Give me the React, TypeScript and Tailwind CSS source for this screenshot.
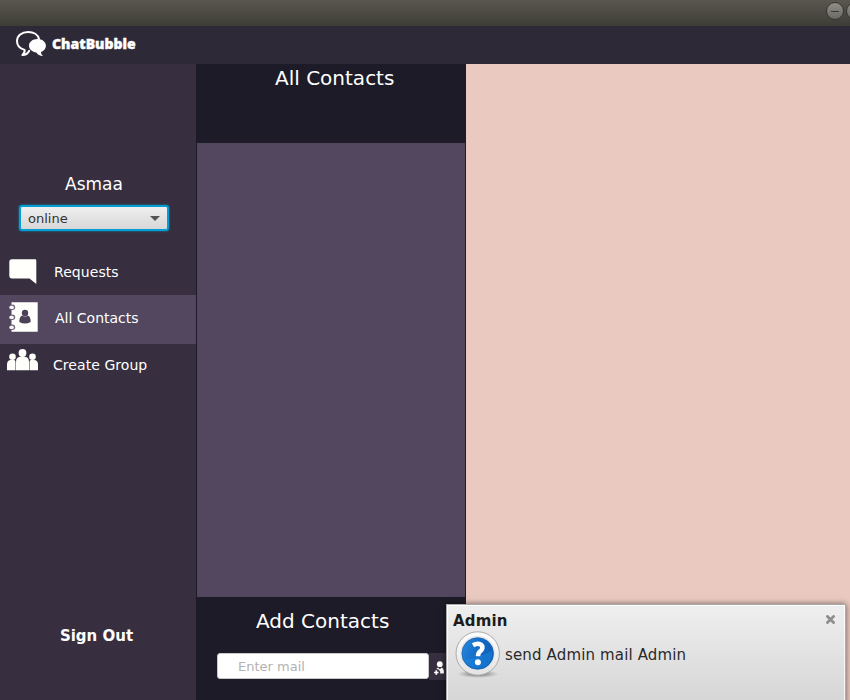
import React from "react";

function LogoIcon() {
  return (
    <svg width="32" height="28" viewBox="0 0 32 28" className="shrink-0">
      <path
        d="M24 9C23 4.400 18.500 1.900 13.200 1.900C6.700 1.900 2 5.900 2 11C2 15.400 5 18.700 9.600 19.900C9.900 21.800 9.200 23.600 7.400 25.100C10.700 25.100 12.900 23.500 14.200 20.800"
        fill="none"
        stroke="#fff"
        strokeWidth="2"
        strokeLinecap="round"
        strokeLinejoin="round"
      />
      <path
        d="M22.500 9C27.300 9 30.900 11.900 30.900 15.700C30.900 18.500 29 20.900 26 21.900C25.900 23.400 26.700 24.700 28.200 26.100C24.700 25.900 22.600 24.500 21.400 22.400C17.200 22 14 19.300 14 15.700C14 11.900 17.700 9 22.500 9Z"
        fill="#fff"
      />
    </svg>
  );
}

function RequestIcon() {
  return (
    <svg width="28" height="26" viewBox="0 0 28 26">
      <path d="M3 .3H26Q27.300 .3 27.300 1.500V25L20.500 19.500H3Q.3 19.500 .3 16.500V3Q.3 .3 3 .3Z" fill="#fffffb" />
    </svg>
  );
}

function ContactsIcon() {
  return (
    <svg width="30" height="30" viewBox="0 0 30 30">
      <path d="M2.500 .3H28.700V29.700H2.500V27.600A2.300 2.300 0 0 0 2.500 23V17.600A2.300 2.300 0 0 0 2.500 13V7.600A2.300 2.300 0 0 0 2.500 3Z" fill="#fffffb" />
      {[5.300, 15.300, 25.300].map((y) => (
        <g key={y}>
          <circle cx="3.500" cy={y} r="2.700" fill="#6e6478" />
          <rect x="0.300" y={y - 1.600} width="4.600" height="3.200" rx="1.500" fill="#f6f5f3" />
        </g>
      ))}
      <circle cx="16" cy="11" r="3.200" fill="#4c4158" />
      <path d="M13 13.500Q16 15.700 19 13.500C21 14.700 21.800 17 21.700 20Q16 23 10.300 20C10.200 17 11 14.700 13 13.500Z" fill="#4c4158" />
    </svg>
  );
}

function GroupIcon() {
  return (
    <svg width="32" height="22" viewBox="0 0 32 22" fill="#fffffb">
      <circle cx="5.500" cy="7.700" r="3.300" />
      <circle cx="25.500" cy="7.700" r="3.300" />
      <path d="M0 21.300V15.500Q0 11.200 4 11H7Q8.600 11 8.500 13V21.300ZM22.500 21.300V13Q22.400 11 24 11H27Q31 11.200 31 15.500V21.300Z" />
      <circle cx="15.500" cy="4" r="3.900" />
      <path d="M9 21.300V13Q9 8.300 13 7.800H18Q22 8.300 22 13V21.300Z" />
    </svg>
  );
}

function AddUserIcon() {
  return (
    <svg width="12" height="14" viewBox="0 0 12 14" fill="#fff">
      <circle cx="5.800" cy="3.200" r="2.900" />
      <path d="M2.200 8L4 6.500L5.800 8.300L7.800 6.500Q9.800 7.800 9.900 10V12.500H6.200V10.300L4.200 8.300Z" />
      <path d="M2.300 9.300V13.700M.1 11.500H4.500" stroke="#fff" strokeWidth="1.700" />
    </svg>
  );
}

function QuestionIcon() {
  return (
    <svg width="46" height="48" viewBox="0 0 46 48">
      <defs>
        <linearGradient id="ring" x1="0" y1="0" x2="0" y2="1">
          <stop offset="0" stopColor="#fff" />
          <stop offset="1" stopColor="#e2e2e2" />
        </linearGradient>
        <linearGradient id="blue" x1="0" y1=".3" x2="1" y2=".7">
          <stop offset="0" stopColor="#2585dc" />
          <stop offset=".5" stopColor="#136ac4" />
          <stop offset="1" stopColor="#0d5cb4" />
        </linearGradient>
        <radialGradient id="shade">
          <stop offset="0" stopColor="#333" stopOpacity=".8" />
          <stop offset="1" stopColor="#777" stopOpacity="0" />
        </radialGradient>
      </defs>
      <ellipse cx="23" cy="43" rx="21" ry="4" fill="url(#shade)" />
      <circle cx="22.700" cy="22.500" r="21.700" fill="url(#ring)" stroke="#aaa" strokeWidth="1" />
      <circle cx="22.700" cy="22.500" r="17.500" fill="#e3e5e8" />
      <circle cx="22.700" cy="22.500" r="15.800" fill="url(#blue)" stroke="#1762ae" strokeWidth=".7" />
      <path d="M8.500 29Q20 28 37 20Q38.500 31 30 35.500Q17 41 8.500 29Z" fill="#1d90e8" opacity=".4" />
      <path d="M18 14.300Q22.500 11.700 25.600 13.500C28.500 15.500 27.500 18.500 25.200 20.300Q23 22.100 23 25.300" fill="none" stroke="#fff" strokeWidth="4.600" />
      <circle cx="22.900" cy="31.300" r="3" fill="#fff" />
    </svg>
  );
}

function WindowButton({ minus }: { minus?: boolean }) {
  return (
    <div className="flex h-[18px] w-[18px] shrink-0 items-center justify-center rounded-full border border-[#35342f] bg-linear-to-b from-[#8f8e87] to-[#6a6963]">
      {minus && <div className="h-px w-2 bg-[#393832]" />}
    </div>
  );
}

export default function App() {
  return (
    <div className="relative flex h-[700px] w-[850px] flex-col overflow-hidden bg-[#1d1b27] font-['DejaVu_Sans',sans-serif] text-white">
      <div className="flex h-[26px] shrink-0 gap-[2px] bg-linear-to-b from-[#5a574f] to-[#3d3d36] pt-[2px] pl-[826px]">
        <WindowButton minus />
        <WindowButton />
      </div>
      <header className="flex h-[38px] shrink-0 bg-[#2e2937] pt-1 pl-[15px]">
        <LogoIcon />
        <span className="ml-[5px] font-['Open_Sans',sans-serif] text-[14px] leading-[28px] font-extrabold [-webkit-text-stroke:0.4px_white]">ChatBubble</span>
      </header>

      <div className="flex h-[636px]">
        <aside className="flex w-[196px] shrink-0 flex-col bg-[#372f3f]">
          <div className="mt-[108px] pr-[8px] text-center text-[17px] leading-6">Asmaa</div>
          <div className="mt-[9px] ml-[19px] flex h-[26px] w-[150px] items-center justify-between rounded-[3px] border-2 border-[#039ed3] bg-linear-to-b from-[#efefef] to-[#d7d7d7] pr-[7px] pl-[7px] text-[13px] text-[#323232] shadow-[0_0_2px_#039ed3]">
            <span className="pt-[2px]">online</span>
            <svg width="10" height="5" viewBox="0 0 10 5">
              <path d="M0 0H10L5 5Z" fill="#555" />
            </svg>
          </div>
          <nav className="mt-[16px] text-[14px]">
            <div className="flex h-[48px] pl-[9px]">
              <div className="w-[45px] pt-[12px]"><RequestIcon /></div>
              <span className="leading-[50px] tracking-[0.06px]">Requests</span>
            </div>
            <div className="flex h-[49px] bg-[#52475e] pl-[9px]">
              <div className="w-[46px] pt-[7px]"><ContactsIcon /></div>
              <span className="leading-[46px]">All Contacts</span>
            </div>
            <div className="flex h-[48px] pl-[7px]">
              <div className="w-[46px] pt-[5px]"><GroupIcon /></div>
              <span className="leading-[42px] tracking-[0.06px]">Create Group</span>
            </div>
          </nav>
          <div className="mt-[232px] pr-[3px] text-center text-[15px] leading-6 font-bold">Sign Out</div>
        </aside>

        <section className="flex w-[270px] shrink-0 flex-col">
          <h1 className="h-[79px] pl-[79px] text-[20px] leading-7">All Contacts</h1>
          <div className="mr-px ml-px h-[454px] bg-[#52475e]" />
          <h2 className="mt-[10px] pl-[60px] text-[20px] leading-7">Add Contacts</h2>
          <div className="mt-[18px] flex pl-[21px]">
            <input
              className="h-[26px] w-[212px] rounded-[3px] border border-[#c8c8c8] bg-white pl-5 text-[13px] text-gray-800 placeholder:text-[#b2b2b2] placeholder:opacity-100"
              placeholder="Enter mail"
            />
            <div className="h-[27px] w-[30px] bg-[#372f3f] pt-[8px] pl-[5px]"><AddUserIcon /></div>
          </div>
        </section>
        <main className="flex-1 bg-[#eacac0]" />
      </div>

      <div className="absolute top-[604px] left-[446px] flex h-[110px] w-[400px] flex-col border border-[#aaa] bg-linear-to-b from-[#efefef] to-[#d3d3d3] text-[#2a2a2a] shadow-[0_0_6px_rgba(0,0,0,0.55)] ring-1 ring-white/80 ring-inset">
        <div className="flex h-[26px] justify-between pr-[10px] pl-[6px]">
          <span className="text-[15px] leading-[32px] font-bold tracking-[0.15px] text-[#1c1c1c]">Admin</span>
          <svg width="9" height="9" viewBox="0 0 9 9" className="mt-[10px]">
            <path d="M1.500 1.500L7.500 7.500M7.500 1.500L1.500 7.500" stroke="#8e8e8e" strokeWidth="2.700" strokeLinecap="square" />
          </svg>
        </div>
        <div className="flex pl-[8px]">
          <QuestionIcon />
          <span className="ml-[4px] text-[15px] leading-[48px] tracking-[0.15px]">send Admin mail Admin</span>
        </div>
      </div>
    </div>
  );
}
